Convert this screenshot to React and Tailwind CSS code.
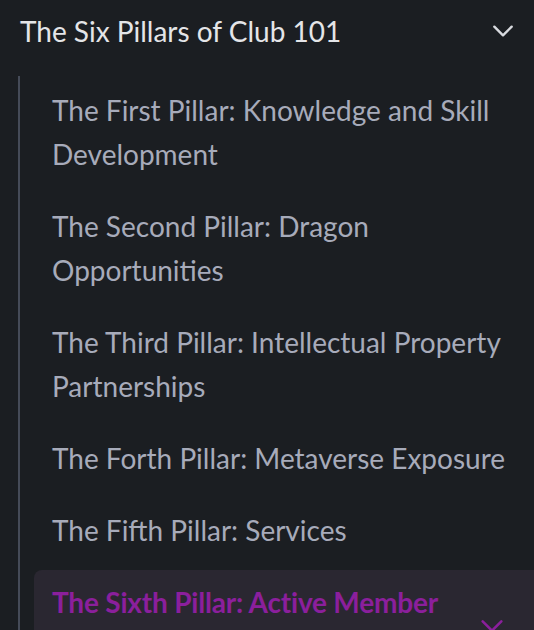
const pillars = [
  'The First Pillar: Knowledge and Skill Development',
  'The Second Pillar: Dragon Opportunities',
  'The Third Pillar: Intellectual Property Partnerships',
  'The Forth Pillar: Metaverse Exposure',
  'The Fifth Pillar: Services',
];

function Chevron({ className }) {
  return (
    <svg viewBox="0 0 24 24" fill="none" stroke="currentColor" strokeWidth="2.2" strokeLinecap="round" strokeLinejoin="round" className={className}>
      <path d="M4 8l8 8 8-8" />
    </svg>
  );
}

export default function App() {
  return (
    <div className="w-[534px] h-[630px] overflow-hidden bg-[#1b1e22] font-['Lato','Noto_Sans',sans-serif]">
      <div className="flex items-center justify-between h-[62px] pl-5 pr-[18px]">
        <span className="text-[28px] text-[#e4e5e8]">The Six Pillars of Club 101</span>
        <Chevron className="w-[26px] h-[26px] text-[#d8dadf]" />
      </div>
      <div className="ml-[18px] mt-[14px] border-l-2 border-[#454b58] pl-[14px] flex flex-col gap-1">
        {pillars.map((p) => (
          <div key={p} className="px-[18px] py-3 text-[28px] leading-[44px] text-[#a7abba]">
            {p}
          </div>
        ))}
        {/* active pillar */}
        <div className="-mr-6 mt-0.5 rounded-lg bg-[#2a2731] pl-[18px] pr-10 pt-[10px] pb-6 relative">
          <span className="text-[28px] leading-[44px] font-bold tracking-[-0.2px] text-[#8b1f9c]">The Sixth Pillar: Active Member</span>
          <Chevron className="absolute left-[444px] top-[42px] w-[28px] h-[28px] text-[#8b1f9c]" />
        </div>
      </div>
    </div>
  );
}
